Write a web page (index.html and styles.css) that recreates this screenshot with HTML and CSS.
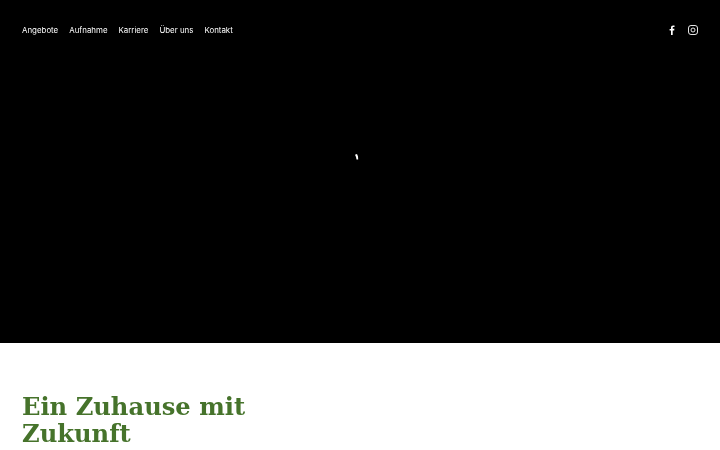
FILE: index.html
```html
<!DOCTYPE html>
<html lang="de">
<head>
    <meta charset="UTF-8">
    <meta name="viewport" content="width=device-width, initial-scale=1.0">
    <title>Ein Zuhause mit Zukunft</title>
    <link rel="stylesheet" href="styles.css">
</head>
<body>
    <header class="hero">
        <nav class="topnav">
            <ul class="menu">
                <li><a href="#">Angebote</a></li>
                <li><a href="#">Aufnahme</a></li>
                <li><a href="#">Karriere</a></li>
                <li><a href="#">Über uns</a></li>
                <li><a href="#">Kontakt</a></li>
            </ul>
            <div class="social">
                <a href="#" aria-label="Facebook">
                    <svg width="10" height="10" viewBox="0 0 10 10"><path fill="#fff" d="M4 10V5.600H2.600V3.900H4V2.700C4 1.200 4.800.4 6.200.4c.6 0 1.100 0 1.300.1v1.500h-.9c-.7 0-.9.300-.9.900v.9h1.700l-.2 1.700H5.700V10z"/></svg>
                </a>
                <a href="#" aria-label="Instagram">
                    <svg width="10" height="10" viewBox="0 0 10 10" fill="none" stroke="#fff" stroke-width=".9"><rect x=".5" y=".5" width="9" height="9" rx="2.500"/><circle cx="5" cy="5" r="2"/></svg>
                </a>
            </div>
        </nav>
        <div class="loader">
            <svg class="spinner" width="4" height="6" viewBox="0 0 4 6"><path fill="#fff" d="M0 .8 2 0l1 2.500.2 2.900-1.700.2L1 3z"/></svg>
        </div>
    </header>
    <main class="intro">
        <h1>Ein Zuhause mit Zukunft</h1>
    </main>
</body>
</html>
```

FILE: styles.css
```css
html, body {
    height: 100%;
    overflow: hidden;
}

body {
    margin: 0;
    background: #fff;
    font-family: Inter, sans-serif;
}

/* Dark video area */
.hero {
    height: 343px;
    background: #000;
    display: flex;
    flex-direction: column;
}

.topnav {
    display: flex;
    justify-content: space-between;
    align-items: center;
    padding: 22px 22px 0;
    height: 16px;
    will-change: transform;
}

.menu {
    display: flex;
    gap: 11px;
    margin: 0;
    padding: 0;
    list-style: none;
}

.menu a {
    display: block;
    color: #fff;
    font-size: 7.9px;
    line-height: 16px;
    text-decoration: none;
}

.social {
    display: flex;
    gap: 11px;
    align-items: center;
}

.social a {
    display: flex;
}

.loader {
    display: flex;
    justify-content: center;
    padding-top: 116px;
}

.spinner {
    margin-left: -7px;
}

.intro {
    padding: 50px 22px 0;
    will-change: transform;
}

.intro h1 {
    width: 260px;
    margin: 0;
    color: #46732b;
    font-family: "DejaVu Serif", serif;
    font-size: 24.2px;
    font-weight: 700;
    line-height: 27px;
}
```
